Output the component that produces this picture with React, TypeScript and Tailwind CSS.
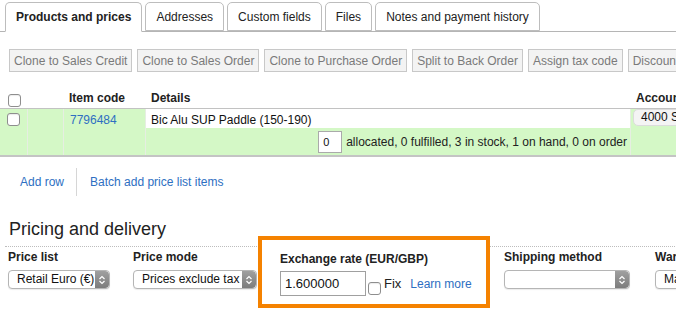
import React from 'react';

const font = { fontFamily: '"Liberation Sans", Arial, Helvetica, sans-serif' };

function Tab({ label, active = false }: { label: string; active?: boolean }) {
  return (
    <div
      className={`h-[29px] px-[10px] flex items-center rounded-t-[5px] border border-[#bdbdbd] bg-white text-[12px] text-[#222] mr-[3px] ${
        active ? 'border-b-white font-bold -mb-px h-[30px] pb-px' : ''
      }`}
    >
      {label}
    </div>
  );
}

function ActionButton({ label }: { label: string }) {
  return (
    <div className="h-[23px] px-[4px] flex items-center border border-[#c8c8c8] bg-[#f3f3f3] text-[12px] text-[#7a7a7a] whitespace-nowrap shrink-0">
      {label}
    </div>
  );
}

function Checkbox() {
  return <div className="w-[13px] h-[13px] rounded-[3px] border border-[#8e8e8e] bg-white shadow-[inset_0_1px_1px_rgba(0,0,0,0.08)]" />;
}

function Stepper() {
  return (
    <div className="w-[14px] self-stretch rounded-r-[4px] bg-gradient-to-b from-[#a0a0a0] to-[#7c7c7c] flex items-center justify-center">
      <svg width="8" height="10" viewBox="0 0 8 10">
        <path d="M1.5 4 L4 1.5 L6.5 4" fill="none" stroke="white" strokeWidth="1.2" />
        <path d="M1.5 6 L4 8.5 L6.5 6" fill="none" stroke="white" strokeWidth="1.2" />
      </svg>
    </div>
  );
}

function Select({ label, width }: { label: string; width: string }) {
  return (
    <div className={`${width} h-[19px] flex items-stretch rounded-[4px] border border-[#b5b5b5] bg-white shadow-[0_1px_1px_rgba(0,0,0,0.08)] overflow-hidden`}>
      <div className="flex-1 px-[8px] text-[12px] leading-[17px] text-[#111] whitespace-nowrap overflow-hidden">{label}</div>
      <Stepper />
    </div>
  );
}

export default function App() {
  return (
    <div className="w-[676px] h-[309px] overflow-hidden bg-white text-[#222]" style={font}>
      {/* tabs */}
      <div className="flex items-end pl-[5px] pt-[2px] border-b border-[#b5b5b5] w-[1000px]">
        <Tab label="Products and prices" active />
        <Tab label="Addresses" />
        <Tab label="Custom fields" />
        <Tab label="Files" />
        <Tab label="Notes and payment history" />
      </div>

      {/* action buttons */}
      <div className="flex gap-[5px] pl-[9px] mt-[17px] w-[1000px]">
        <ActionButton label="Clone to Sales Credit" />
        <ActionButton label="Clone to Sales Order" />
        <ActionButton label="Clone to Purchase Order" />
        <ActionButton label="Split to Back Order" />
        <ActionButton label="Assign tax code" />
        <ActionButton label="Discount" />
      </div>

      {/* table */}
      <div className="mt-[15px] w-[800px]">
        <div className="grid grid-cols-[28px_36px_82px_485px_1fr] h-[22px] border-b border-[#c2c2c2] text-[12px] font-bold">
          <div className="flex items-center justify-center pt-[5px]">
            <Checkbox />
          </div>
          <div />
          <div className="pl-[5px] pt-[2px]">Item code</div>
          <div className="pl-[5px] pt-[2px]">Details</div>
          <div className="pl-[5px] pt-[2px]">Account</div>
        </div>
        <div className="grid grid-cols-[28px_36px_82px_485px_1fr] h-[48px] bg-[#d4f8c6] border-b-2 border-[#c4c4c4] text-[12px]">
          <div className="flex justify-center pt-[4px] border-r border-[#e6eee2]">
            <Checkbox />
          </div>
          <div className="border-r border-[#e6eee2]" />
          <div className="pl-[6px] pt-[2px] text-[#2e6fc2] border-r border-[#e6eee2]">7796484</div>
          <div className="flex flex-col border-r border-[#e6eee2]">
            <div className="h-[19px] bg-white pl-[5px] pt-[2px] text-[#111]">Bic Alu SUP Paddle (150-190)</div>
            <div className="flex items-center justify-end pr-[3px] mt-[3px]">
              <div className="w-[24px] h-[22px] border border-[#aaa] bg-white text-[11px] pl-[4px] leading-[20px] text-[#111]">0</div>
              <div className="pl-[4px] text-[#222]">allocated, 0 fulfilled, 3 in stock, 1 on hand, 0 on order</div>
            </div>
          </div>
          <div className="pl-[2px]">
            <div className="h-[17px] rounded-l-[5px] bg-[#f4f4f4] border border-[#dcdcdc] pl-[7px] leading-[15px] text-[#111] whitespace-nowrap">
              4000 Sales
            </div>
          </div>
        </div>
      </div>

      {/* add rows */}
      <div className="flex items-center mt-[11px] text-[12px] text-[#2e6fc2]">
        <div className="pl-[20px] pr-[12px]">Add row</div>
        <div className="w-px h-[28px] bg-[#d6d6d6]" />
        <div className="pl-[13px]">Batch add price list items</div>
      </div>

      {/* pricing and delivery */}
      <div className="pl-[9px] mt-[22px] text-[18px] leading-[22px] text-[#222]">Pricing and delivery</div>
      <div className="ml-[5px] mt-[6px] border-t border-dotted border-[#bdbdbd] flex items-start pt-[2px] w-[900px]">
        <div className="w-[128px] pl-[3px]">
          <div className="text-[12px] font-bold leading-[16px]">Price list</div>
          <div className="mt-[5px]">
            <Select label="Retail Euro (€)" width="w-[102px]" />
          </div>
        </div>
        <div className="w-[125px]">
          <div className="text-[12px] font-bold leading-[16px]">Price mode</div>
          <div className="mt-[5px]">
            <Select label="Prices exclude tax" width="w-[124px]" />
          </div>
        </div>
        <div className="relative z-10 w-[232px] -mt-[13px] border-4 border-[#f58200] bg-white pl-[18px] pt-[11px] pb-[8px]">
          <div className="text-[12px] font-bold leading-[16px]">Exchange rate (EUR/GBP)</div>
          <div className="mt-[4px] flex items-center">
            <div className="w-[86px] h-[25px] border border-[#a0a0a0] bg-white pl-[4px] text-[13px] leading-[23px] text-[#111]">1.600000</div>
            <div className="ml-[2px] mt-[9px]">
              <Checkbox />
            </div>
            <div className="ml-[3px] text-[13px] text-[#222]">Fix</div>
            <div className="ml-[9px] text-[12px] text-[#2e6fc2]">Learn more</div>
          </div>
        </div>
        <div className="w-[165px] pl-[14px]">
          <div className="text-[12px] font-bold leading-[16px]">Shipping method</div>
          <div className="mt-[5px]">
            <Select label="" width="w-[126px]" />
          </div>
        </div>
        <div className="w-[150px]">
          <div className="text-[12px] font-bold leading-[16px]">Warehouse</div>
          <div className="mt-[5px]">
            <Select label="Main warehouse" width="w-[124px]" />
          </div>
        </div>
      </div>
    </div>
  );
}
